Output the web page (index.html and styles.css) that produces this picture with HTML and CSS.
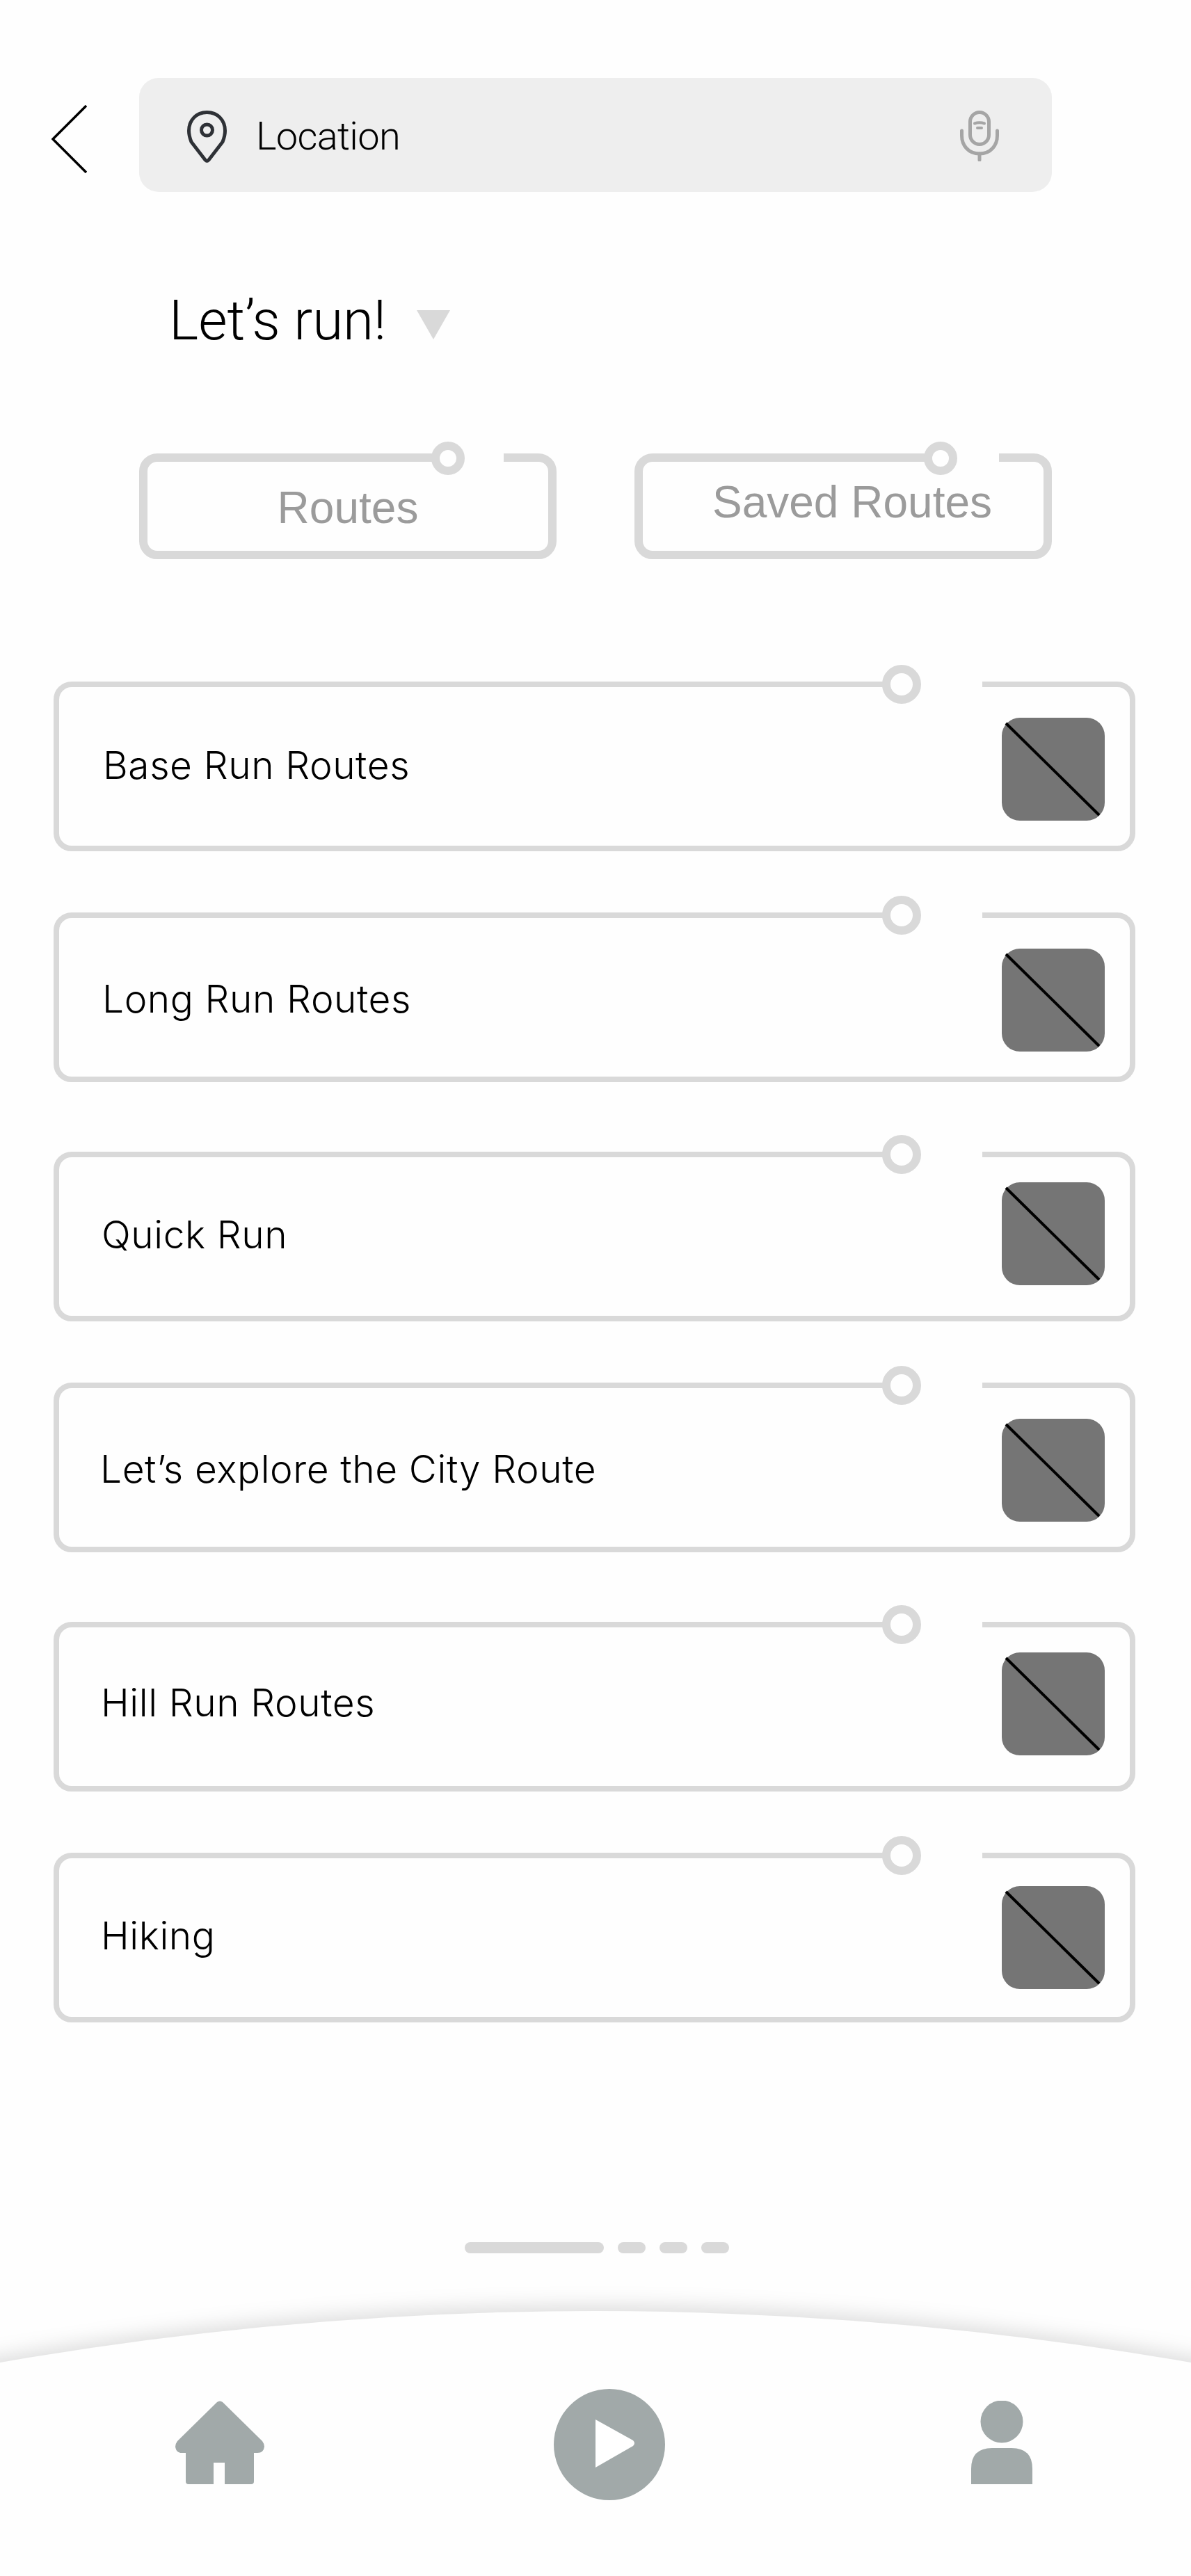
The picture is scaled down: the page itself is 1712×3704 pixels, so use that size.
FILE: index.html
```html
<!DOCTYPE html>
<html lang="en">
<head>
    <meta charset="UTF-8">
    <meta name="viewport" content="width=device-width, initial-scale=1.0">
    <title>Let's run!</title>
    <link rel="stylesheet" href="styles.css">
</head>
<body>

<div class="page">
    <!-- Search row -->
    <div class="top-row">
        <svg class="back-icon" width="51" height="98" viewBox="0 0 51 98">
            <path d="M50 1 L2 49 L50 97" fill="none" stroke="#000" stroke-width="3.5"/>
        </svg>
        <div class="search">
            <svg class="pin-icon" width="57" height="76" viewBox="0 0 57 76">
                <path d="M28.5 2.5 C13 2.5 2.5 14 2.5 29 C2.5 35 4 40 6 45 L26 71 Q28.5 74 31 71 L51 45 C53 40 54.5 35 54.5 29 C54.5 14 44 2.5 28.5 2.5 Z" fill="none" stroke="#2e3136" stroke-width="5"/>
                <circle cx="28.5" cy="28" r="8" fill="none" stroke="#2e3136" stroke-width="5"/>
            </svg>
            <span class="search-label">Location</span>
            <svg class="mic-icon" width="56" height="73" viewBox="0 0 56 73" fill="none" stroke="#a5a5a5" stroke-linecap="round">
                <rect x="14.5" y="2.5" width="27" height="46" rx="13.5" stroke-width="5"/>
                <path d="M2.5 29 V36 C2.5 50 12 62 28 62 C44 62 53.5 50 53.5 36 V29" stroke-width="5"/>
                <path d="M28 62 V71" stroke-width="5"/>
                <path d="M21 18.5 Q28 16 35 18.5" stroke-width="4"/>
                <path d="M25 25 H31" stroke-width="4"/>
            </svg>
        </div>
    </div>

    <!-- Heading -->
    <div class="title-row">
        <h1 class="title">Let’s run!</h1>
        <svg class="title-arrow" width="48" height="42" viewBox="0 0 48 42">
            <polygon points="0,0 48,0 24,42" fill="#d9d9d9"/>
        </svg>
    </div>

    <!-- Tabs -->
    <div class="tabs">
        <div class="tab tab-routes">
            <span class="tab-gap"></span>
            <span class="tab-ring"></span>
            Routes
        </div>
        <div class="tab tab-saved">
            <span class="tab-gap"></span>
            <span class="tab-ring"></span>
            Saved Routes
        </div>
    </div>

    <!-- Route list -->
    <div class="route-list">
        <div class="route-card">
            <span class="card-gap"></span>
            <span class="card-ring"></span>
            <span class="route-name">Base Run Routes</span>
            <svg class="route-thumb" width="148" height="148" viewBox="0 0 148 148">
                <rect width="148" height="148" rx="26" fill="#757575"/>
                <line x1="6" y1="8" x2="140" y2="140" stroke="#000" stroke-width="4"/>
            </svg>
        </div>
        <div class="route-card">
            <span class="card-gap"></span>
            <span class="card-ring"></span>
            <span class="route-name">Long Run Routes</span>
            <svg class="route-thumb" width="148" height="148" viewBox="0 0 148 148">
                <rect width="148" height="148" rx="26" fill="#757575"/>
                <line x1="6" y1="8" x2="140" y2="140" stroke="#000" stroke-width="4"/>
            </svg>
        </div>
        <div class="route-card">
            <span class="card-gap"></span>
            <span class="card-ring"></span>
            <span class="route-name">Quick Run</span>
            <svg class="route-thumb" width="148" height="148" viewBox="0 0 148 148">
                <rect width="148" height="148" rx="26" fill="#757575"/>
                <line x1="6" y1="8" x2="140" y2="140" stroke="#000" stroke-width="4"/>
            </svg>
        </div>
        <div class="route-card">
            <span class="card-gap"></span>
            <span class="card-ring"></span>
            <span class="route-name">Let’s explore the City Route</span>
            <svg class="route-thumb" width="148" height="148" viewBox="0 0 148 148">
                <rect width="148" height="148" rx="26" fill="#757575"/>
                <line x1="6" y1="8" x2="140" y2="140" stroke="#000" stroke-width="4"/>
            </svg>
        </div>
        <div class="route-card">
            <span class="card-gap"></span>
            <span class="card-ring"></span>
            <span class="route-name">Hill Run Routes</span>
            <svg class="route-thumb" width="148" height="148" viewBox="0 0 148 148">
                <rect width="148" height="148" rx="26" fill="#757575"/>
                <line x1="6" y1="8" x2="140" y2="140" stroke="#000" stroke-width="4"/>
            </svg>
        </div>
        <div class="route-card">
            <span class="card-gap"></span>
            <span class="card-ring"></span>
            <span class="route-name">Hiking</span>
            <svg class="route-thumb" width="148" height="148" viewBox="0 0 148 148">
                <rect width="148" height="148" rx="26" fill="#757575"/>
                <line x1="6" y1="8" x2="140" y2="140" stroke="#000" stroke-width="4"/>
            </svg>
        </div>
    </div>

    <!-- Pager -->
    <div class="pager">
        <span class="pager-bar"></span>
        <span class="pager-dot"></span>
        <span class="pager-dot"></span>
        <span class="pager-dot"></span>
    </div>

    <!-- Bottom navigation -->
    <div class="nav">
        <svg class="nav-curve" width="1712" height="404" viewBox="0 0 1712 404">
            <path d="M-200 135.6 Q856 -89.6 1912 135.6 V500 H-200 Z" fill="#fefefe"/>
        </svg>
        <svg class="nav-home" width="128" height="120" viewBox="0 0 128 120">
            <path d="M60 2 Q64 -1 68 2 L125 58 Q128 62 128 66 Q127 75 118 75 H113 V116 Q113 120 109 120 H71 V89 H55 V120 H19 Q15 120 15 116 V75 H10 Q1 75 0 66 Q0 62 3 58 Z" fill="#a1a9a9"/>
        </svg>
        <svg class="nav-play" width="160" height="160" viewBox="0 0 160 160">
            <circle cx="80" cy="80" r="80" fill="#a1a9a9"/>
            <path d="M60 44 L114 74 Q118 78 114 82 L60 113 Z" fill="#fff"/>
        </svg>
        <svg class="nav-person" width="88" height="120" viewBox="0 0 88 120">
            <circle cx="44" cy="30" r="30.5" fill="#a1a9a9"/>
            <path d="M0 120 V98 Q0 68 30 68 H58 Q88 68 88 98 V120 Z" fill="#a1a9a9"/>
        </svg>
    </div>
</div>

</body>
</html>
```
FILE: styles.css
```css
body {
    margin: 0;
    padding: 0;
    background-color: #fefefe;
    color: #000;
    font-family: Roboto, "Liberation Sans", Arial, sans-serif;
    font-weight: 300;
}
.page {
    width: 1712px;
    height: 3704px;
    overflow: hidden;
}

/* search row */
.top-row {
    display: flex;
    align-items: flex-start;
    padding: 112px 0 0 74px;
}
.back-icon {
    margin: 39px 75px 0 0;
}
.search {
    display: flex;
    align-items: center;
    width: 1312px;
    height: 164px;
    background-color: #eeeeee;
    border-radius: 28px;
    box-sizing: border-box;
    padding: 0 76px 0 69px;
}
.pin-icon {
    margin-top: 6px;
}
.search-label {
    margin-left: 42px;
    font-size: 56px;
    line-height: 64px;
    margin-top: 4px;
    letter-spacing: -0.7px;
}
.mic-icon {
    margin-left: auto;
    margin-top: 2px;
}

/* heading */
.title-row {
    display: flex;
    align-items: flex-start;
    margin: 140px 0 0 243px;
}
.title {
    margin: 0;
    font-size: 80px;
    line-height: 90px;
    font-weight: 300;
}
.title-arrow {
    margin: 30px 0 0 44px;
}

/* tabs */
.tabs {
    display: flex;
    gap: 112px;
    margin: 146px 0 0 200px;
}
.tab {
    position: relative;
    width: 600px;
    height: 152px;
    box-sizing: border-box;
    border: 12px solid #d9d9d9;
    border-radius: 26px;
    text-align: center;
    color: #9b9b9b;
    font-family: "Liberation Sans", Arial, sans-serif;
    font-weight: 400;
    font-size: 64px;
    line-height: 80px;
}
.tab-routes {
    padding-top: 26px;
}
.tab-saved {
    padding: 18px 0 0 26px;
}
.tab-gap {
    position: absolute;
    top: -12px;
    right: 64px;
    width: 80px;
    height: 12px;
    background-color: #fefefe;
}
.tab-saved .tab-gap {
    width: 84px;
}
.tab-ring {
    position: absolute;
    top: -29px;
    right: 120px;
    width: 24px;
    height: 24px;
    border: 12px solid #d9d9d9;
    border-radius: 50%;
    background-color: #fefefe;
}
.tab-saved .tab-ring {
    right: 124px;
}

/* route list */
.route-list {
    margin: 176px 0 0 77px;
}
.route-card {
    position: relative;
    display: flex;
    justify-content: space-between;
    align-items: flex-start;
    width: 1555px;
    height: 244px;
    box-sizing: border-box;
    border: 8px solid #d9d9d9;
    border-radius: 26px;
    padding: 0 36px 0 62px;
    margin-top: var(--card-gap, 88px);
}
.route-card:first-child {
    margin-top: 0;
}
.route-card:nth-child(2) { --card-gap: 88px; --name-top: 81px; --name-left: 0px; --thumb-top: 44px; }
.route-card:nth-child(3) { --card-gap: 100px; --name-top: 76px; --name-left: -1px; --thumb-top: 36px; }
.route-card:nth-child(4) { --card-gap: 88px; --name-top: 81px; --name-left: -3px; --thumb-top: 44px; }
.route-card:nth-child(5) { --card-gap: 100px; --name-top: 73px; --name-left: -2px; --thumb-top: 36px; }
.route-card:nth-child(6) { --card-gap: 88px; --name-top: 76px; --name-left: -2px; --thumb-top: 40px; }
.route-name {
    margin-top: var(--name-top, 77px);
    margin-left: var(--name-left, 1px);
    font-family: Inter, "Liberation Sans", sans-serif;
    font-weight: 300;
    font-size: 55px;
    line-height: 70px;
    letter-spacing: 0.6px;
}
.route-thumb {
    margin-top: var(--thumb-top, 44px);
}
.card-gap {
    position: absolute;
    top: -8px;
    right: 212px;
    width: 116px;
    height: 8px;
    background-color: #fefefe;
}
.card-ring {
    position: absolute;
    top: -32px;
    right: 300px;
    width: 32px;
    height: 32px;
    border: 12px solid #d9d9d9;
    border-radius: 50%;
    background-color: #fefefe;
}

/* pager */
.pager {
    display: flex;
    gap: 20px;
    margin: 316px 0 0 668px;
}
.pager-bar,
.pager-dot {
    height: 16px;
    border-radius: 8px;
    background-color: #d9d9d9;
}
.pager-bar {
    width: 200px;
}
.pager-dot {
    width: 40px;
}

/* bottom nav */
.nav {
    position: relative;
    display: flex;
    align-items: flex-start;
    height: 404px;
    margin-top: 60px;
    padding: 135px 0 0 252px;
    box-sizing: border-box;
}
.nav-curve {
    position: absolute;
    top: 0;
    left: 0;
    overflow: visible;
    filter: drop-shadow(0 -8px 14px rgba(0, 0, 0, 0.13));
}
.nav-home,
.nav-play,
.nav-person {
    position: relative;
}
.nav-home {
    margin-top: 17px;
}
.nav-play {
    margin-left: 416px;
}
.nav-person {
    margin: 17px 0 0 440px;
}
```
